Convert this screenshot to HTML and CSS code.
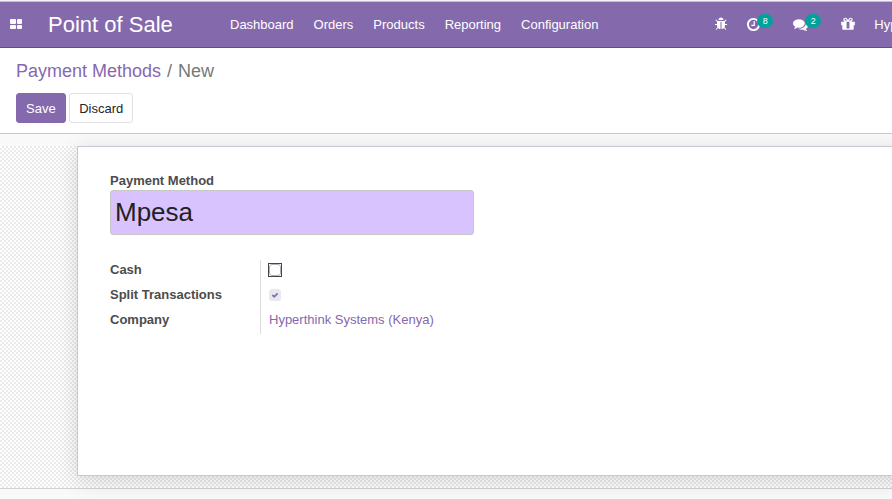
FILE: index.html
```html
<!DOCTYPE html>
<html lang="en">
<head>
<meta charset="utf-8">
<title>Payment Methods</title>
<link rel="stylesheet" href="styles.css">
</head>
<body>
<header class="navbar">
  <a class="apps"><i></i><i></i><i></i><i></i></a>
  <span class="brand">Point of Sale</span>
  <nav class="menu"><a>Dashboard</a><a>Orders</a><a>Products</a><a>Reporting</a><a>Configuration</a></nav>
  <div class="systray">
    <svg class="icon bug" viewBox="0 0 1792 1792"><path d="M1696 960q0 26-19 45t-45 19h-224q0 171-67 290l208 209q19 19 19 45t-19 45q-18 19-45 19t-45-19l-198-197q-5 5-15 13t-42 28.500-65 36.500-82 29-97 13v-896h-128v896q-51 0-101.500-13.500t-87-33-66-39-43.500-32.500l-15-14-183 207q-20 21-48 21-24 0-43-16-19-18-20.500-44.500t15.500-46.500l202-227q-58-114-58-274h-224q-26 0-45-19t-19-45 19-45 45-19h224v-294l-173-173q-19-19-19-45t19-45 45-19 45 19l173 173h844l173-173q19-19 45-19t45 19 19 45-19 45l-173 173v294h224q26 0 45 19t19 45zm-480-576h-640q0-133 93.500-226.500t226.500-93.500 226.500 93.500 93.500 226.500z"/></svg>
    <span class="tray clock"><svg class="icon" viewBox="0 0 15 15"><circle cx="7.500" cy="7.500" r="5.600" fill="none" stroke="#fff" stroke-width="1.900"/><path d="M8.200 4v4.300H5.300" fill="none" stroke="#fff" stroke-width="1.200"/></svg><b class="badge">8</b></span>
    <span class="tray chat"><svg class="icon" viewBox="0 0 1792 1792"><path d="M1408 768q0 139-94 257t-256.500 186.500-353.500 68.500q-86 0-176-16-124 88-278 128-36 9-86 16h-3q-11 0-20.500-8t-11.500-21q-1-3-1-6.500t.5-6.500 2-6l2.500-5 3.500-5.500 4-5 4.500-5 4-4.500q5-6 23-25t26-29.500 22.500-29 25-38.500 20.500-44q-124-72-195-177t-71-224q0-139 94-257t256.500-186.500 353.500-68.500 353.500 68.500 256.500 186.500 94 257zm384 256q0 120-71 224.500t-195 176.500q10 24 20.500 44t25 38.500 22.500 29 26 29.500 23 25q1 1 4 4.500t4.500 5 4 5 3.500 5.500l2.500 5 2 6 .5 6.500-1 6.500q-3 14-13 22t-22 7q-50-7-86-16-154-40-278-128-90 16-176 16-271 0-472-132 58 4 88 4 161 0 309-45t264-129q125-92 192-212t67-254q0-77-23-152 129 71 204 178t75 230z"/></svg><b class="badge">2</b></span>
    <svg class="icon gift" viewBox="0 0 1792 1792"><path d="M1056 1356v-716h-320v716q0 25 18 38.500t46 13.500h192q28 0 46-13.500t18-38.500zm-456-844h195l-126-161q-26-31-69-31-40 0-68 28t-28 68 28 68 68 28zm688-96q0-40-28-68t-68-28q-43 0-69 31l-125 161h194q40 0 68-28t28-68zm376 256v320q0 14-9 23t-23 9h-96v416q0 40-28 68t-68 28h-1088q-40 0-68-28t-28-68v-416h-96q-14 0-23-9t-9-23v-320q0-14 9-23t23-9h440q-93 0-158.500-65.500t-65.500-158.500 65.500-158.500 158.500-65.500q107 0 168 77l128 165 128-165q61-77 168-77 93 0 158.500 65.500t65.500 158.500-65.500 158.500-158.500 65.500h440q14 0 23 9t9 23z"/></svg>
    <span class="company">Hyp</span>
  </div>
</header>
<section class="control-panel">
  <div class="breadcrumb"><a>Payment Methods</a><span class="sep">/</span><span>New</span></div>
  <div class="buttons"><button class="btn primary">Save</button><button class="btn">Discard</button></div>
</section>
<main class="content">
  <div class="sheet-bg">
    <div class="sheet">
      <label class="title-label" for="name">Payment Method</label>
      <input class="title-input" id="name" value="Mpesa">
      <div class="group">
        <div class="labels"><span>Cash</span><span>Split Transactions</span><span>Company</span></div>
        <div class="values">
          <span><i class="focus"><i class="check"></i></i></span>
          <span><i class="check on"><svg viewBox="0 0 12 12"><path d="M3.300 6l1.900 1.700 3.500-3.400" fill="none" stroke="#8c6db5" stroke-width="1.800"/></svg></i></span>
          <a>Hyperthink Systems (Kenya)</a>
        </div>
      </div>
    </div>
  </div>
</main>
</body>
</html>
```
FILE: styles.css
```css
* { box-sizing: border-box; }
body {
  margin: 0;
  height: 499px;
  overflow: hidden;
  display: flex;
  flex-direction: column;
  background: #fff;
  font: 13px/20px "Liberation Sans", Arial, sans-serif;
  color: #4c4c4c;
}
.navbar {
  height: 48px;
  flex: none;
  display: flex;
  align-items: center;
  padding: 1px 0 0 10px;
  color: #fff;
  background: #8569ad;
  border-bottom: 1px solid #67488f;
  box-shadow: inset 0 1px #f3f3f3, inset 0 2px #c4c0c8;
  white-space: nowrap;
}
.apps {
  width: 12px;
  flex: none;
  display: grid;
  grid-template-columns: 5.500px 5.500px;
  grid-auto-rows: 4.700px;
  gap: 1px;
}
.apps i { background: #fff; border-radius: 1px; }
.brand { width: 182px; margin-left: 26px; padding-top: 2px; flex: none; font-size: 22px; line-height: 44px; }
.menu { display: flex; flex: none; gap: 20px; padding-top: 2px; }
.systray { display: flex; flex: 1; min-width: 0; height: 44px; align-items: center; }
.icon { display: block; fill: #fff; flex: none; }
.bug { margin-left: 116px; width: 14px; height: 14px; }
.tray { position: relative; flex: none; }
.tray .icon { width: 15px; height: 15px; }
.clock { margin-left: 18px; }
.chat { margin-left: 32px; }
.badge {
  position: absolute;
  left: 11px;
  top: -3px;
  width: 16px;
  height: 14px;
  border-radius: 7px;
  background: #00a09d;
  font-size: 9px;
  font-weight: 400;
  line-height: 14px;
  text-align: center;
}
.chat .badge { left: 12px; }
.gift { width: 16px; height: 16px; margin-left: 32px; }
.company { margin-left: 18px; padding-top: 2px; }
.control-panel {
  height: 86px;
  flex: none;
  padding: 10px 16px;
  border-bottom: 1px solid #c9c9cd;
}
.breadcrumb { font-size: 18px; line-height: 27px; color: #777; }
.breadcrumb a, .values a { color: #8568b0; }
.sep { margin: 0 6px; }
.buttons { display: flex; gap: 3px; margin-top: 8px; }
.btn {
  height: 30px;
  padding: 2px 9px 0 9.500px;
  border: 1px solid #dee2e6;
  border-radius: 3px;
  background: #fff;
  color: #212529;
  font: inherit;
}
.primary { padding-left: 9px; background: #8569ad; border-color: #8569ad; color: #fff; }
.content { flex: 1; padding-top: 12px; background: #f9f9f9; overflow: hidden; }
.sheet-bg {
  height: 343px;
  padding-left: 77px;
  border-bottom: 1px solid #d2d2d5;
  background: conic-gradient(#ebebeb 25%, #fff 0 50%, #ebebeb 0 75%, #fff 0) 0 0 / 4px 4px;
}
.sheet {
  width: 900px;
  height: 330px;
  padding: 24px 32px;
  border: 1px solid #c8c8d3;
  background: #fff;
  box-shadow: 0 5px 20px rgba(0, 0, 0, .14);
}
.title-label { display: block; font-weight: 700; line-height: 19px; }
.title-input {
  display: block;
  width: 364px;
  height: 45px;
  padding: 0 4px;
  border: 1px solid #c8c8c8;
  border-radius: 3px;
  background: #d9c3ff;
  color: #212121;
  font: 26px/43px "Liberation Sans", Arial, sans-serif;
}
.group { display: flex; margin-top: 25px; height: 74px; line-height: 25px; }
.labels { width: 150px; display: grid; grid-auto-rows: 25px; font-weight: 700; margin-top: -3px; }
.values { padding-left: 8px; display: grid; grid-auto-rows: 25px; border-left: 1px solid #ddd; }
.values > * { display: flex; align-items: center; height: 19px; }
.check { display: block; width: 12px; height: 12px; border: 1px solid #b0b0bd; border-radius: 3px; }
.focus { margin-left: -1px; border: 1px solid #444; }
.on { border: 0; background: #e9e8ee; }
.on svg { display: block; width: 12px; height: 12px; }
```
